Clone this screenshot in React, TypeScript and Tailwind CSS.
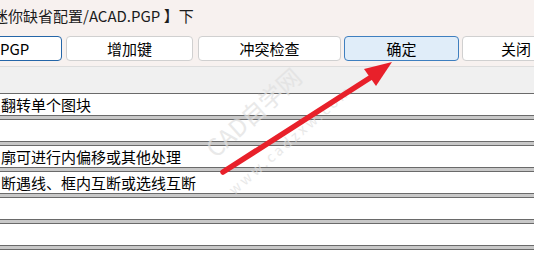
import React from "react";

const rows = ["翻转单个图块", "", "廓可进行内偏移或其他处理", "断遇线、框内互断或选线互断", "", "", ""];

export default function App() {
  return (
    <div
      className="relative w-[534px] h-[258px] overflow-hidden bg-[#f0f0f0] text-black"
      style={{ fontFamily: '"Noto Sans CJK SC", "Noto Sans", sans-serif' }}
    >
      <div className="h-[66px] bg-[#f7f1ef] flex flex-col">
        <div className="h-[36px] pt-[5px] text-[15px] leading-[22px] text-[#1c1c1c] whitespace-nowrap ml-[-7px]">
          迷你缺省配置/ACAD.PGP 】下
        </div>
        <div className="flex h-[25px] text-[15px] leading-[22px]">
          <div className="shrink-0 w-[82px] ml-[-20px] rounded-[4px] border border-[#2566a8] bg-white flex items-center pl-[19px]">
            PGP
          </div>
          <div className="shrink-0 w-[127px] ml-[4px] rounded-[4px] border border-[#d0d0d0] bg-white flex items-center justify-center">
            增加键
          </div>
          <div className="shrink-0 w-[143px] ml-[5px] rounded-[4px] border border-[#d0d0d0] bg-white flex items-center justify-center">
            冲突检查
          </div>
          <div className="shrink-0 w-[115px] ml-[3px] rounded-[4px] border border-[#3f7fbf] bg-[#e0edf9] flex items-center justify-center">
            确定
          </div>
          <div className="shrink-0 w-[108px] ml-[3px] rounded-[4px] border border-[#d0d0d0] bg-white flex items-center justify-center">
            关闭
          </div>
        </div>
      </div>
      <div className="h-px bg-[#dddddd]" />
      <div className="h-[26px]" />
      <div className="flex flex-col">
        {rows.map((t, i) => (
          <div key={i} className="flex flex-col">
            <div className="h-[23px] border-y border-[#6a6a6a] bg-white text-[15px] leading-[21px] pl-[1px] whitespace-nowrap">
              {t}
            </div>
            <div className="h-[3px] bg-[#c8c8c8]" />
          </div>
        ))}
      </div>

      <div className="absolute left-[253px] top-[112px] -translate-x-1/2 -translate-y-1/2 -rotate-[42deg] text-[24px] leading-[26px] text-[#e0e0e0] opacity-70 whitespace-nowrap pointer-events-none">
        CAD自学网
      </div>
      <div className="absolute left-[290px] top-[139px] -translate-x-1/2 -translate-y-1/2 -rotate-[41deg] text-[14px] leading-[16px] tracking-[3px] text-[#e0e0e0] opacity-70 whitespace-nowrap pointer-events-none">
        www.cadzxw.com
      </div>

      <svg className="absolute inset-0 pointer-events-none" width="534" height="258" viewBox="0 0 534 258">
        <line x1="223" y1="172" x2="376" y2="74" stroke="#e8202a" strokeWidth="5.5" strokeLinecap="round" />
        <polygon points="392,62 364,69 376,86" fill="#e8202a" />
      </svg>
    </div>
  );
}
